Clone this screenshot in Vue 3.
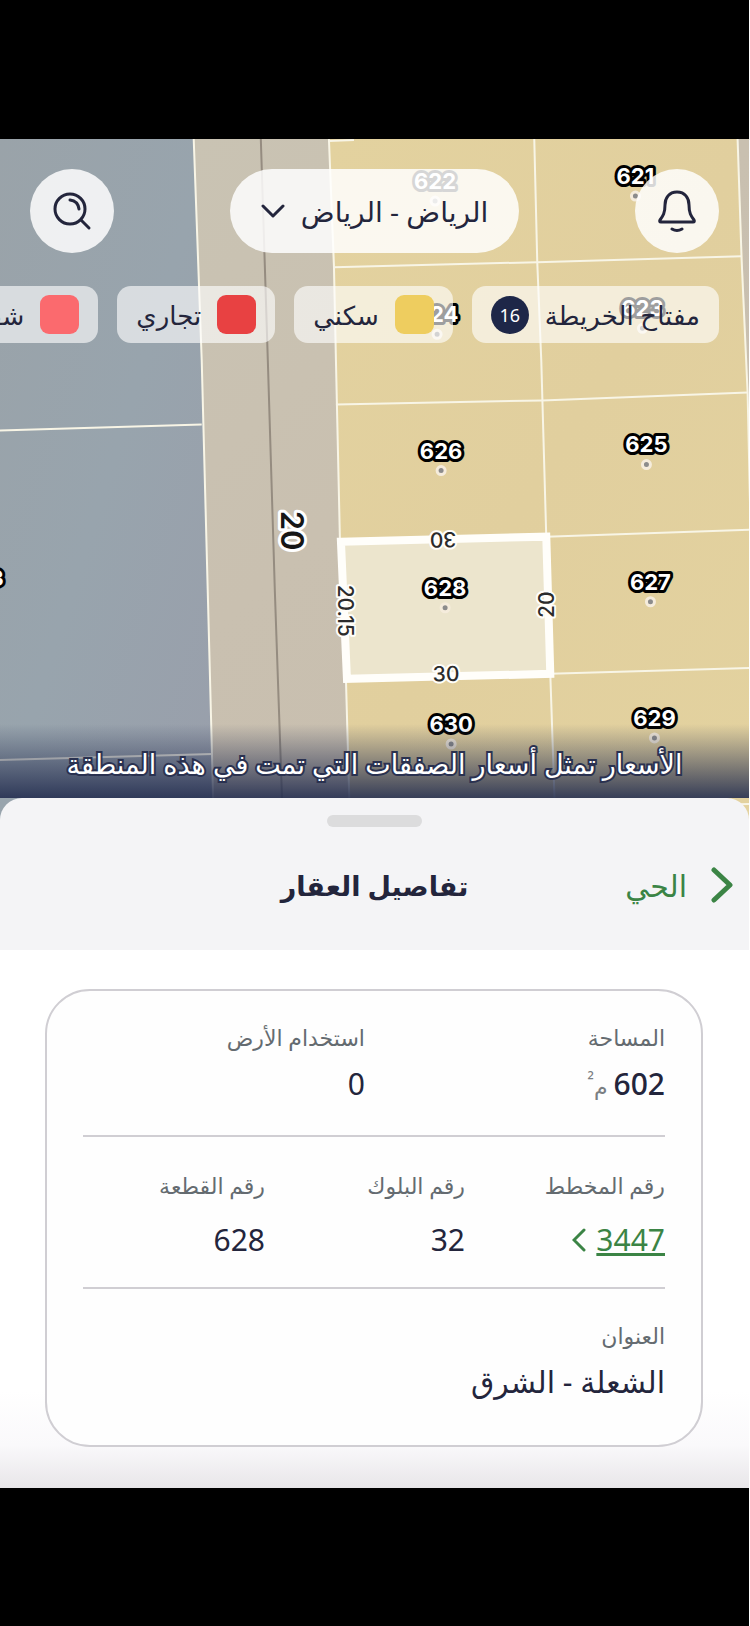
<script setup>
import { ref } from 'vue'

const city = ref('الرياض - الرياض')

const legend = ref([
  { id: 1, name: 'سكني', color: '#eecd5f' },
  { id: 2, name: 'تجاري', color: '#e84142' },
  { id: 3, name: 'شقق', color: '#fb6a6e' }
])

// Parcel numbers with their position on the map canvas
const parcels = ref([
  { no: '622', x: 435, y: 42 },
  { no: '621', x: 635, y: 37 },
  { no: '624', x: 437, y: 175 },
  { no: '623', x: 642, y: 169 },
  { no: '626', x: 441, y: 311 },
  { no: '625', x: 646, y: 305 },
  { no: '628', x: 445, y: 448 },
  { no: '627', x: 650, y: 442 },
  { no: '630', x: 451, y: 584 },
  { no: '629', x: 654, y: 578 },
  { no: '633', x: -17, y: 438 }
])

// Side lengths of the selected parcel
const sides = ref([
  { text: '30', x: 443, y: 400, angle: 179 },
  { text: '30', x: 446, y: 534, angle: -1 },
  { text: '20', x: 546, y: 465, angle: -90 },
  { text: '20.15', x: 346, y: 471, angle: 90 }
])
</script>

<template>
  <div class="page" dir="rtl">
    <main class="screen">
      <section class="map">
        <svg class="map-canvas" viewBox="0 0 749 680" preserveAspectRatio="xMidYMin slice">
          <defs>
            <linearGradient id="road" x1="0" y1="0" x2="1" y2="1">
              <stop offset="0" stop-color="#c9c4b4" />
              <stop offset="0.5" stop-color="#c9c0b0" />
              <stop offset="1" stop-color="#c7bdae" />
            </linearGradient>
            <linearGradient id="blue" x1="0" y1="0" x2="1" y2="1">
              <stop offset="0" stop-color="#9aa3a9" />
              <stop offset="0.5" stop-color="#98a4ad" />
              <stop offset="1" stop-color="#999fab" />
            </linearGradient>
            <linearGradient id="sand" x1="0" y1="0" x2="1" y2="1">
              <stop offset="0" stop-color="#e3d29f" />
              <stop offset="0.5" stop-color="#e1cf9e" />
              <stop offset="1" stop-color="#e3d29f" />
            </linearGradient>
          </defs>
          <rect width="750" height="682" fill="url(#road)" />
          <path d="M0 0H194L202 221L208 451L214 682H0Z" fill="url(#blue)" />
          <path d="M329 0H737L742 120L747 253L750 391V682H350L346 540L340 401L336 221Z" fill="url(#sand)" />
          <path d="M261 0L268 221L275 451L283 682" class="road-line" />
          <g class="plot-lines">
            <path d="M194 0L202 221L208 451L214 682" />
            <path d="M0 291L202 285M0 620L213 614" />
            <path d="M329 2L354 1M329 0L334 126L336 221L340 401L346 540L350 682" />
            <path d="M534 0L537 123L541 221L546 398L550 534L555 682" />
            <path d="M737 0L741 120L747 253L750 391" />
            <path d="M334 128L537 123L741 117M336 265L542 261L747 253M546 397L750 390M550 534L750 528M555 668L750 664" />
          </g>
          <path d="M341 402L546 397L550 534L347 539Z" class="selected-plot" />
          <text class="street" x="293" y="391" transform="rotate(90 293 391)">20</text>
          <text
            v-for="(side, i) in sides"
            :key="i"
            class="side"
            :x="side.x"
            :y="side.y"
            :transform="`rotate(${side.angle} ${side.x} ${side.y})`"
          >{{ side.text }}</text>
          <g v-for="parcel in parcels" :key="parcel.no">
            <circle class="dot" :cx="parcel.x" :cy="parcel.y + 20" r="4" />
            <text class="parcel-no" :x="parcel.x" :y="parcel.y">{{ parcel.no }}</text>
          </g>
        </svg>

        <div class="controls">
          <div class="top-bar">
            <button class="round-btn" aria-label="الإشعارات">
              <svg width="40" height="44" viewBox="0 0 40 44">
                <path d="M20 3C12 3 8 9 8 16C8 24 6 27 3 31Q2 33 4 33H36Q38 33 37 31C34 27 32 24 32 16C32 9 28 3 20 3Z" />
                <path d="M15 40Q20 43 25 40" />
              </svg>
            </button>
            <button class="city-btn">
              <span>{{ city }}</span>
              <svg width="24" height="14" viewBox="0 0 24 14">
                <path d="M2 2L12 12L22 2" />
              </svg>
            </button>
            <button class="round-btn" aria-label="بحث">
              <svg width="40" height="40" viewBox="0 0 40 40">
                <circle cx="18" cy="18" r="15" />
                <path d="M18 9Q26 10 27 18M29 29L37 37" />
              </svg>
            </button>
          </div>

          <div class="chips">
            <button class="chip">
              <span>مفتاح الخريطة</span>
              <span class="count">16</span>
            </button>
            <button v-for="item in legend" :key="item.id" class="chip">
              <span class="swatch" :style="{ backgroundColor: item.color }"></span>
              <span>{{ item.name }}</span>
            </button>
          </div>
        </div>

        <p class="map-note">الأسعار تمثل أسعار الصفقات التي تمت في هذه المنطقة</p>
      </section>

      <section class="sheet">
        <header class="sheet-head">
          <span class="handle"></span>
          <div class="sheet-title">
            <a href="#" class="back-link">
              <svg width="22" height="36" viewBox="0 0 22 36">
                <path d="M3 3L19 18L3 33" />
              </svg>
              <span>الحي</span>
            </a>
            <h1>تفاصيل العقار</h1>
          </div>
        </header>

        <div class="sheet-body">
          <div class="card">
            <dl class="row two">
              <div>
                <dt>المساحة</dt>
                <dd><b>602</b> <small>م<sup>²</sup></small></dd>
              </div>
              <div>
                <dt>استخدام الأرض</dt>
                <dd>0</dd>
              </div>
            </dl>
            <dl class="row three">
              <div>
                <dt>رقم المخطط</dt>
                <dd>
                  <a href="#" class="plan-link">
                    <span>3447</span>
                    <svg width="14" height="24" viewBox="0 0 14 24">
                      <path d="M12 2L2 12L12 22" />
                    </svg>
                  </a>
                </dd>
              </div>
              <div>
                <dt>رقم البلوك</dt>
                <dd>32</dd>
              </div>
              <div>
                <dt>رقم القطعة</dt>
                <dd>628</dd>
              </div>
            </dl>
            <dl class="row">
              <div>
                <dt>العنوان</dt>
                <dd>الشعلة - الشرق</dd>
              </div>
            </dl>
          </div>
        </div>
      </section>
    </main>
  </div>
</template>

<style>
body {
  margin: 0;
  background-color: #ffffff;
}
</style>

<style scoped>
.page {
  min-height: 100vh;
  box-sizing: border-box;
  padding: 139px 0;
  margin-right: 1px;
  background-color: #000000;
  color: #23253c;
  font-family: 'Noto Sans', 'DejaVu Sans', sans-serif;
}

button {
  border: none;
  padding: 0;
  color: inherit;
  font-family: inherit;
  cursor: pointer;
}

svg {
  fill: none;
  flex-shrink: 0;
}

/* MAP */
.map {
  position: relative;
  display: flex;
  flex-direction: column;
  justify-content: space-between;
  aspect-ratio: 750 / 660;
}

.map-canvas {
  position: absolute;
  top: 0;
  left: 0;
  width: 100%;
  height: calc(100% + 22px);
}

.plot-lines {
  stroke: #f8f5e6;
  stroke-width: 2;
}

.road-line {
  stroke: #958c80;
  stroke-width: 2;
}

.selected-plot {
  fill: #ece5cd;
  stroke: #fffefa;
  stroke-width: 8;
}

.map-canvas text {
  font-family: Inter, sans-serif;
  text-anchor: middle;
  dominant-baseline: central;
  paint-order: stroke;
  stroke-linejoin: round;
  direction: ltr;
}

.parcel-no {
  font-size: 22px;
  font-weight: 700;
  fill: #ffffff;
  stroke: #000000;
  stroke-width: 6;
}

.side {
  font-size: 21px;
  font-weight: 500;
  fill: #2b2b2b;
  stroke: #fffefa;
  stroke-width: 4;
}

.street {
  font-size: 31px;
  font-weight: 600;
  fill: #161616;
  stroke: #ffffff;
  stroke-width: 6;
}

.dot {
  fill: #8c8c8c;
  stroke: #f5ecdc;
  stroke-width: 3;
}

.controls {
  position: relative;
  display: flex;
  flex-direction: column;
  gap: 33px;
  padding-top: 30px;
}

.top-bar {
  display: flex;
  justify-content: space-between;
  padding: 0 30px;
}

.top-bar svg {
  stroke: #23253c;
  stroke-width: 3;
  stroke-linecap: round;
  stroke-linejoin: round;
}

.round-btn,
.city-btn {
  display: flex;
  align-items: center;
  justify-content: center;
  height: 84px;
  background-color: rgba(255, 255, 255, 0.84);
}

.round-btn {
  width: 84px;
  border-radius: 50%;
}

.city-btn {
  gap: 16px;
  padding: 0 31px;
  border-radius: 42px;
  font-size: 28px;
}

.chips {
  display: flex;
  gap: 19px;
  padding: 0 30px;
  overflow: hidden;
}

.chip {
  display: flex;
  align-items: center;
  flex-shrink: 0;
  gap: 16px;
  height: 57px;
  padding: 0 19px;
  border-radius: 14px;
  background-color: rgba(255, 255, 255, 0.62);
  font-size: 26px;
}

.swatch {
  width: 39px;
  height: 39px;
  border-radius: 9px;
}

.count {
  width: 38px;
  height: 38px;
  border-radius: 50%;
  background-color: #1e2748;
  color: #ffffff;
  font-size: 18px;
  line-height: 38px;
}

.map-note {
  position: relative;
  margin: 0;
  padding: 16px 20px 10px;
  background: linear-gradient(rgba(36, 46, 80, 0), rgba(36, 46, 80, 0.9));
  color: #ffffff;
  font-size: 27px;
  line-height: 48px;
  text-align: center;
  -webkit-text-stroke: 4px #2a3150;
  paint-order: stroke fill;
}

/* SHEET */
.sheet {
  position: relative;
}

.sheet-head {
  display: flex;
  flex-direction: column;
  align-items: center;
  height: 152px;
  box-sizing: border-box;
  padding: 17px 16px 0;
  border-radius: 22px 22px 0 0;
  background-color: #f4f4f6;
}

.handle {
  width: 95px;
  height: 12px;
  border-radius: 6px;
  background-color: #dcdcdd;
}

.sheet-title {
  display: grid;
  grid-template-columns: 1fr auto 1fr;
  align-items: center;
  width: 100%;
  height: 116px;
}

.sheet-title h1 {
  margin: 0;
  font-size: 27px;
  font-weight: 700;
}

.back-link {
  display: flex;
  align-items: center;
  gap: 24px;
  color: #3b8445;
  font-size: 30px;
  text-decoration: none;
}

.back-link svg {
  stroke: #3b8445;
  stroke-width: 5;
  stroke-linecap: round;
  stroke-linejoin: round;
}

.sheet-body {
  padding: 39px 46px 41px 45px;
  background: linear-gradient(#ffffff 82%, #faf9fb 92%, #e8e6e9);
}

.card {
  padding: 0 36px 12px;
  border: 2px solid #d0ced3;
  border-radius: 45px;
  background-color: #fefefe;
}

.row {
  display: grid;
  gap: 18px;
  margin: 0;
  padding: 26px 0 24px;
}

.row + .row {
  border-top: 2px solid #d0ced3;
}

.two {
  grid-template-columns: repeat(2, 1fr);
}

.three {
  grid-template-columns: repeat(3, 1fr);
  padding: 28px 0 20px;
}

.three dt {
  margin-bottom: 8px;
}

dt {
  color: #646b70;
  font-size: 22px;
  line-height: 40px;
}

dd {
  display: flex;
  align-items: baseline;
  gap: 6px;
  height: 54px;
  margin: 0;
  font-size: 30px;
  line-height: 54px;
}

dd b {
  font-weight: 500;
}

dd small {
  color: #7b7f83;
  font-size: 22px;
  line-height: 30px;
}

dd sup {
  line-height: 0;
}

.plan-link {
  display: flex;
  align-items: center;
  gap: 10px;
  color: #3b8445;
  text-decoration: none;
}

.plan-link span {
  text-decoration: underline;
}

.plan-link svg {
  stroke: #3b8445;
  stroke-width: 3;
  stroke-linecap: round;
}
</style>
